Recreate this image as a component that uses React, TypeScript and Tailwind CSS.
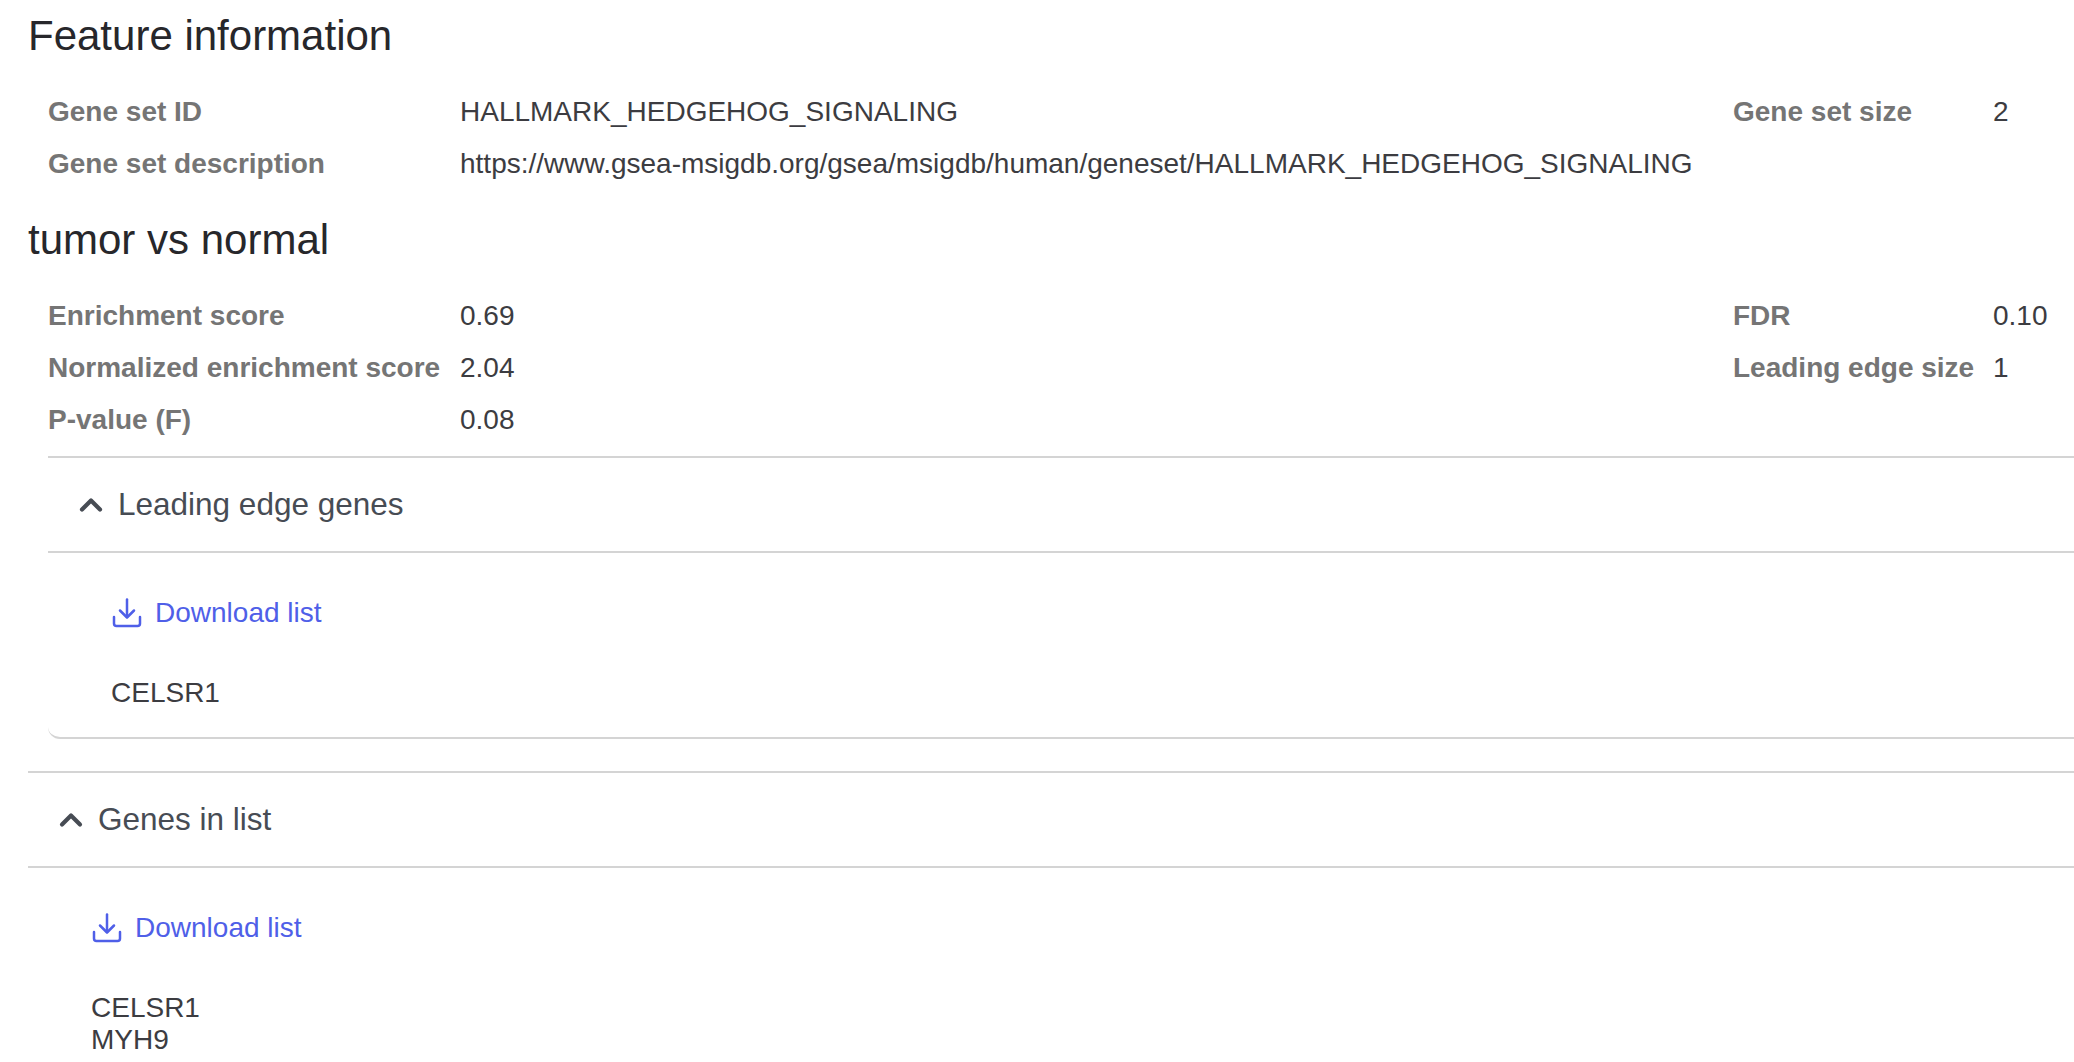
import { ChevronUp } from 'lucide-react';

const InfoRow = ({ label, value, sideLabel, sideValue }: { label: string; value: string; sideLabel?: string; sideValue?: string }) => (
   <div className="grid h-[52px] grid-cols-[412px_1273px_260px_auto] items-center">
      <span className="font-bold text-[#757575]">{label}</span>
      <span>{value}</span>
      <span className="font-bold text-[#757575]">{sideLabel}</span>
      <span>{sideValue}</span>
   </div>
);

const DownloadLink = () => (
   <a className="flex h-8 items-center gap-[13px] text-[#4f5fe8]">
      <svg width="30" height="32" viewBox="0 0 30 32" fill="none" stroke="currentColor" strokeWidth="2.5" strokeLinecap="round" strokeLinejoin="round">
         <path d="M15 2.5V20" />
         <path d="M8 13.5L15 20.5L22 13.5" />
         <path d="M2 20V26.5C2 28.2 3 29 4.5 29H25.5C27 29 28 28.2 28 26.5V20" />
      </svg>
      <span>Download list</span>
   </a>
);

const AccordionHeader = ({ title }: { title: string }) => (
   <div className="flex h-[95px] items-center gap-[9px] border-b-2 border-[#d4d4d4] pl-[25px] text-[31.5px] text-[#474c54]">
      <ChevronUp size={36} strokeWidth={2.8} />
      <span>{title}</span>
   </div>
);

const App = () => {
   return (
      <div className="h-[1062px] w-[2074px] overflow-hidden bg-white pl-7 font-['Liberation_Sans',sans-serif] text-[28px] text-[#3c3c41]">
         <h2 className="mb-[15px] flex h-[71px] items-center text-[42px] text-[#27272b]">Feature information</h2>
         <div className="pl-5">
            <InfoRow label="Gene set ID" value="HALLMARK_HEDGEHOG_SIGNALING" sideLabel="Gene set size" sideValue="2" />
            <InfoRow label="Gene set description" value="https://www.gsea-msigdb.org/gsea/msigdb/human/geneset/HALLMARK_HEDGEHOG_SIGNALING" />
         </div>
         <h2 className="mt-[19px] flex h-[60px] items-center text-[42px] text-[#27272b]">tumor vs normal</h2>
         <div className="mt-[21px] pl-5">
            <InfoRow label="Enrichment score" value="0.69" sideLabel="FDR" sideValue="0.10" />
            <InfoRow label="Normalized enrichment score" value="2.04" sideLabel="Leading edge size" sideValue="1" />
            <InfoRow label="P-value (F)" value="0.08" />
            <div className="mt-[10px] h-[283px] rounded-bl-xl border-y-2 border-[#d4d4d4]">
               <AccordionHeader title="Leading edge genes" />
               <div className="pl-[64px]">
                  <div className="mt-[44px]">
                     <DownloadLink />
                  </div>
                  <div className="mt-12 -ml-px leading-8">CELSR1</div>
               </div>
            </div>
         </div>
         <div className="mt-[32px] border-t-2 border-[#d4d4d4]">
            <AccordionHeader title="Genes in list" />
            <div className="pl-[64px]">
               <div className="mt-[44px]">
                  <DownloadLink />
               </div>
               <div className="mt-12 -ml-px leading-8">
                  <div>CELSR1</div>
                  <div>MYH9</div>
               </div>
            </div>
         </div>
      </div>
   );
};

export default App;
